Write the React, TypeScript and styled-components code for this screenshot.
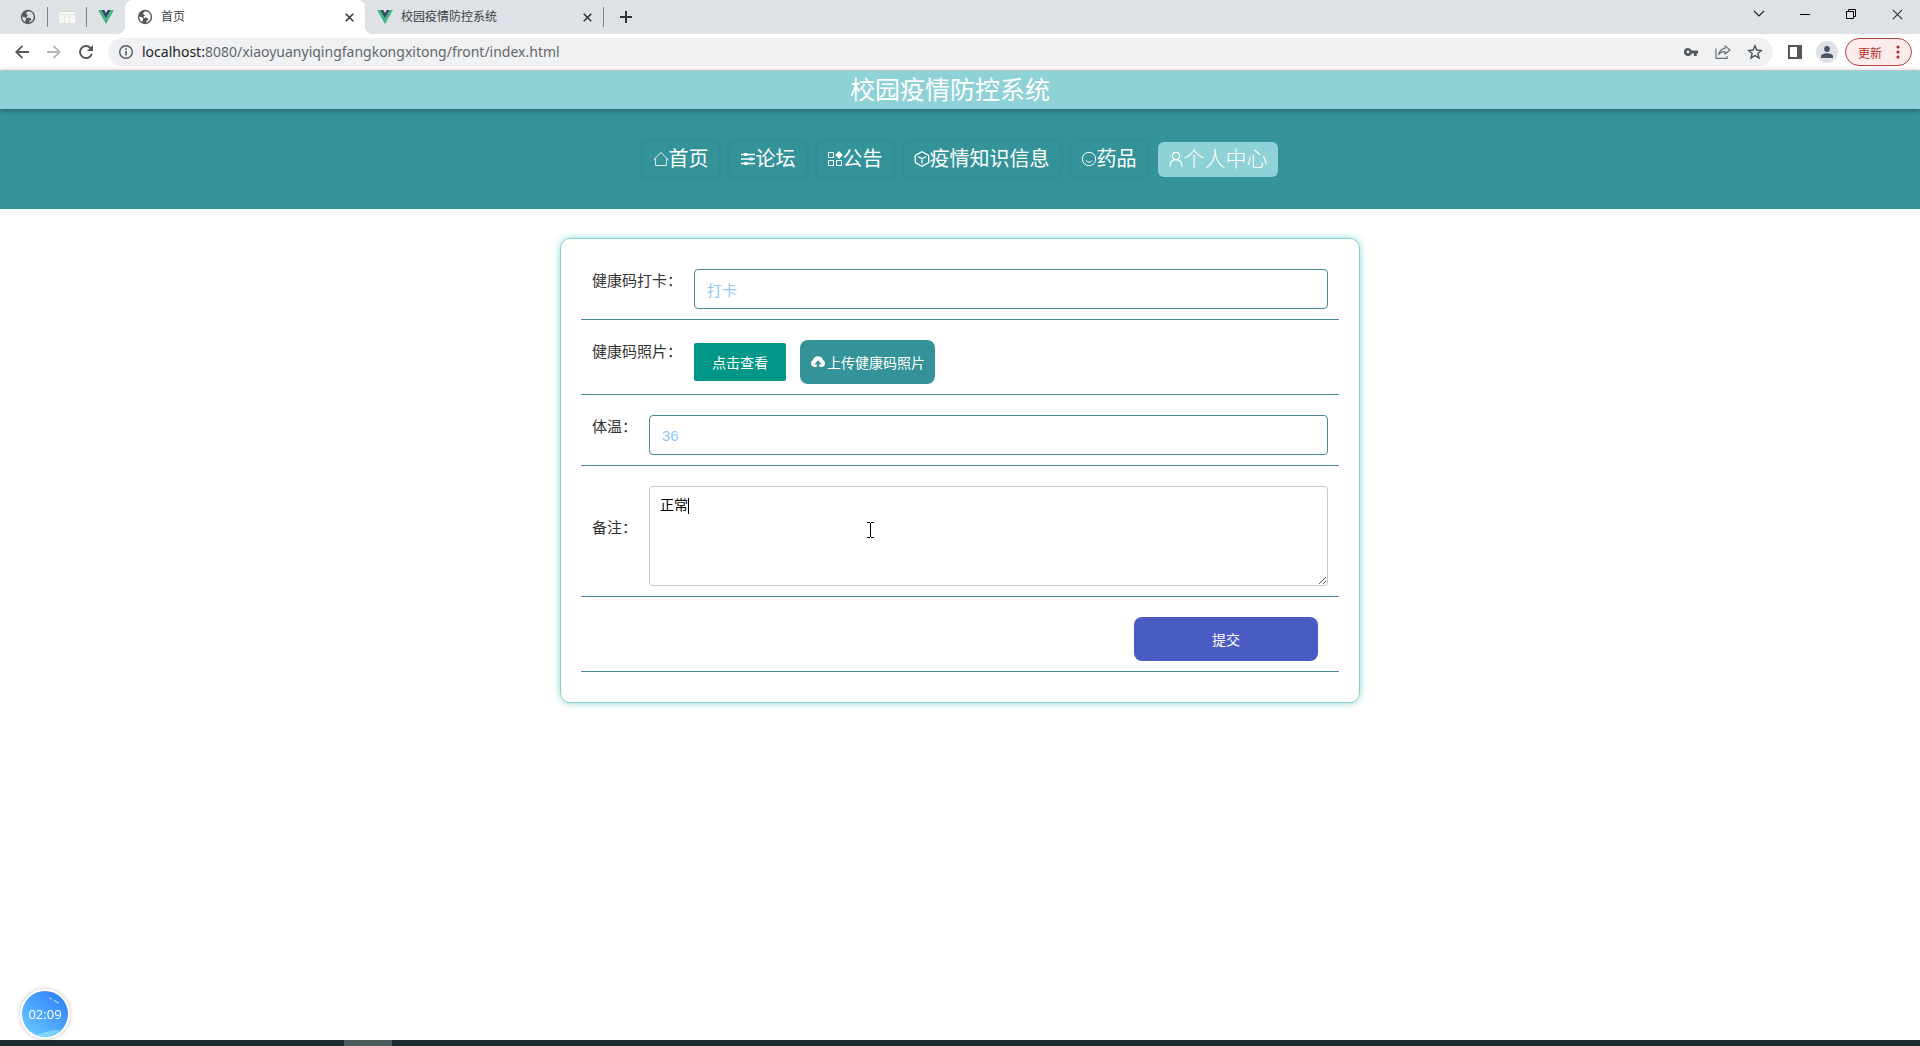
import React from "react";
import styled, { createGlobalStyle } from "styled-components";

const GlobalStyle = createGlobalStyle`
  *, *::before, *::after { box-sizing: border-box; }
  body {
    margin: 0;
    background: #fff;
    font-family: "Liberation Sans", "Noto Sans CJK SC", sans-serif;
    color: #333;
  }
  button, input, textarea { font-family: inherit; margin: 0; }
  svg { display: block; flex: none; }
`;

const Window = styled.div`
  display: flex;
  flex-direction: column;
  min-height: 100vh;
`;

const TabStrip = styled.div`
  display: flex;
  align-items: stretch;
  height: 34px;
  padding-left: 9px;
  background: #dee1e6;
`;

const PinnedTab = styled.button`
  display: flex;
  align-items: center;
  justify-content: center;
  width: 38px;
  padding: 0;
  border: 0;
  background: none;
`;

const NewTab = styled(PinnedTab)`
  width: 44px;
`;

const Separator = styled.span`
  align-self: center;
  width: 1px;
  height: 20px;
  background: #808387;
`;

const Tab = styled.div<{ $active?: boolean }>`
  position: relative;
  display: flex;
  align-items: center;
  gap: 8px;
  width: ${(p) => (p.$active ? 240 : 238)}px;
  padding: 0 8px 0 12px;
  font-size: 12px;
  color: #3c4043;
  border-radius: 8px 8px 0 0;
  background: ${(p) => (p.$active ? "#fff" : "transparent")};
  &::before, &::after {
    content: "";
    display: ${(p) => (p.$active ? "block" : "none")};
    position: absolute;
    bottom: 0;
    width: 8px;
    height: 8px;
  }
  &::before {
    left: -8px;
    background: radial-gradient(circle at 0 0, transparent 8px, #fff 8px);
  }
  &::after {
    right: -8px;
    background: radial-gradient(circle at 100% 0, transparent 8px, #fff 8px);
  }
`;

const TabTitle = styled.span`
  flex: 1;
  line-height: 16px;
  white-space: nowrap;
`;

const IconButton = styled.button<{ $w?: number }>`
  display: flex;
  align-items: center;
  justify-content: center;
  width: ${(p) => p.$w ?? 16}px;
  height: 28px;
  padding: 0;
  border: 0;
  background: none;
`;

const WindowControls = styled.div`
  display: flex;
  margin-left: auto;
`;

const Toolbar = styled.div`
  display: flex;
  align-items: center;
  height: 37px;
  padding: 0 8px 0 6px;
  background: #fff;
  border-bottom: 1px solid #d5e3e5;
`;

const AddressBar = styled.div`
  display: flex;
  align-items: center;
  flex: 1;
  height: 28px;
  margin: 0 6px;
  padding: 0 2px 0 10px;
  border-radius: 14px;
  background: #f0f1f3;
`;

const Url = styled.span`
  flex: 1;
  margin-left: 8px;
  font-family: "Noto Sans", sans-serif;
  font-size: 14px;
  line-height: 20px;
  color: #63676c;
  b { font-weight: 400; color: #202124; }
`;

const Avatar = styled.span`
  display: flex;
  align-items: center;
  justify-content: center;
  width: 22px;
  height: 22px;
  border-radius: 50%;
  background: #dee1e6;
`;

const UpdateButton = styled.button`
  display: flex;
  align-items: center;
  justify-content: space-between;
  width: 67px;
  height: 28px;
  margin-left: 2px;
  padding: 0 11px 0 12px;
  border: 1px solid #b3403c;
  border-radius: 14px;
  background: #fbebeb;
  color: #b3312c;
  font-size: 12px;
`;

const Banner = styled.header`
  position: relative;
  height: 38px;
  padding-right: 20px;
  background: #8ed1d6;
  box-shadow: 0 1px 6px rgba(0, 0, 0, 0.4);
`;

const BannerTitle = styled.h1`
  margin: 0;
  text-align: center;
  font-size: 25px;
  line-height: 38px;
  font-weight: 400;
  color: #fff;
`;

const Nav = styled.nav`
  display: flex;
  align-items: center;
  justify-content: center;
  gap: 11px;
  height: 100px;
  background: #339399;
`;

const NavLink = styled.a<{ $active?: boolean }>`
  display: flex;
  align-items: center;
  height: 35px;
  padding: 0 10px;
  border-radius: 6px;
  font-size: ${(p) => (p.$active ? 21 : 20)}px;
  font-weight: ${(p) => (p.$active ? 300 : 400)};
  line-height: 32px;
  color: #fff;
  text-decoration: none;
  white-space: nowrap;
  background: ${(p) => (p.$active ? "#8ed1d6" : "transparent")};
  box-shadow: ${(p) => (p.$active ? "none" : "0 0 4px rgba(0, 70, 80, 0.14)")};
`;

const Main = styled.main`
  flex: 1;
  padding: 29px 20px;
`;

const Form = styled.form`
  max-width: 800px;
  margin: 0 auto;
  padding: 20px;
  border: 1px solid #8fcdd0;
  border-radius: 10px;
  box-shadow: 0 0 7px rgba(110, 205, 200, 0.8);
`;

const Row = styled.div<{ $end?: boolean }>`
  display: flex;
  align-items: flex-start;
  justify-content: ${(p) => (p.$end ? "flex-end" : "flex-start")};
  gap: 12px;
  margin-bottom: 10px;
  padding: 10px 11px;
  border-bottom: 1px solid #46898f;
`;

const Label = styled.label<{ $tall?: boolean }>`
  padding-top: ${(p) => (p.$tall ? 30 : 0)}px;
  font-size: 15px;
  line-height: 24px;
  white-space: nowrap;
`;

const TextInput = styled.input`
  flex: 1;
  min-width: 0;
  height: 40px;
  padding: 0 12px;
  border: 1px solid #46898f;
  border-radius: 4px;
  background: #fff;
  font-size: 15px;
  color: #90c8f6;
  outline: none;
`;

const Actions = styled.div`
  display: flex;
  align-items: center;
  gap: 14px;
`;

const ViewButton = styled.button`
  height: 38px;
  padding: 0 18px;
  border: 0;
  border-radius: 2px;
  background: #009688;
  color: #fff;
  font-size: 14px;
`;

const UploadButton = styled.button`
  display: flex;
  align-items: center;
  gap: 1px;
  height: 44px;
  padding: 0 10px;
  border: 0;
  border-radius: 8px;
  background: #339399;
  color: #fff;
  font-size: 14px;
`;

const SubmitButton = styled.button`
  width: 184px;
  height: 44px;
  margin-right: 10px;
  border: 0;
  border-radius: 8px;
  background: #4a5bc3;
  color: #fff;
  font-size: 14px;
`;

const NoteField = styled.div`
  position: relative;
  display: flex;
  flex: 1;
`;

const TextArea = styled.textarea`
  flex: 1;
  height: 100px;
  padding: 8px 10px;
  border: 1px solid #c8c8c8;
  border-radius: 4px;
  background: #fff;
  font-size: 14px;
  line-height: 20px;
  color: #000;
  resize: vertical;
  outline: none;
`;

const Caret = styled.span`
  position: absolute;
  left: 39px;
  top: 12px;
  width: 1px;
  height: 16px;
  background: #000;
`;

const Pointer = styled.svg`
  position: absolute;
  left: 218px;
  top: 36px;
`;

const Timer = styled.div`
  position: fixed;
  left: 20px;
  bottom: 7px;
  display: flex;
  align-items: center;
  justify-content: center;
  width: 50px;
  height: 50px;
  border: 2px solid #fff;
  border-radius: 50%;
  box-shadow: 0 0 4px rgba(0, 0, 0, 0.25);
  background: #fff;
`;

const TimerFace = styled.svg`
  position: absolute;
  left: 0;
  top: 0;
`;

const TimerText = styled.time`
  position: relative;
  font-family: "Open Sans", sans-serif;
  font-size: 13px;
  color: #fff;
`;

const Taskbar = styled.footer`
  display: flex;
  height: 6px;
  padding-left: 344px;
  background: #1a2b30;
`;

const TaskbarItem = styled.span`
  width: 48px;
  background: #4a5a5b;
`;

const Globe = ({ land }: { land: string }) => (
  <svg width="16" height="16" viewBox="0 0 16 16">
    <circle cx="8" cy="8" r="7.2" fill="#54585d" />
    <path d="M8.500 2.300C6.800 2.600 5.900 3.900 6.400 4.900c.4.800 1.600.600 1.500 1.600-.1.800-1.300.500-1.400 1.300-.1.800 1.900.400 2.900 1 1 .600 2 .600 1.900 1.600-.1.900-1.300.700-1.700 1.400-.2.500 0 1.300-.5 1.700C11.800 13 13.700 10.700 13.700 8c0-3-2.300-5.500-5.200-5.700Z" fill={land} />
    <path d="M2.300 7.400c.9 0 1.700.9 2.700 1.100.9.200 1.500.8 1.300 1.600-.2.800-.9.900-.9 1.700v1.200C3.400 12.100 2.100 9.900 2.300 7.400Z" fill={land} />
  </svg>
);

const Sheet = () => (
  <svg width="16" height="12" viewBox="0 0 16 12">
    <path d="M0 0h16v12H0z" fill="#f6f7f4" />
    <path d="M0 .5h16" stroke="#c5dcc5" />
    <path d="M0 3.500h16M5.500 3v9M10.500 3v9" stroke="#e6eae6" fill="none" />
  </svg>
);

const VueLogo = () => (
  <svg width="16" height="14" viewBox="0 0 16 14">
    <path d="M0 0h3.200L8 8.300 12.800 0H16L8 14Z" fill="#41b883" />
    <path d="M3.200 0h3L8 3.100 9.800 0h3L8 8.300Z" fill="#35495e" />
  </svg>
);

const Cross = ({ size = 9, w = 1.7 }: { size?: number; w?: number }) => (
  <svg width={size} height={size} viewBox="0 0 10 10" stroke="#303236" strokeWidth={w}>
    <path d="M.8.8l8.400 8.400M9.200.8.8 9.200" />
  </svg>
);

const navIcon = { width: 16, height: 16, viewBox: "0 0 16 16", fill: "none", stroke: "#fff" };

const HomeIcon = () => (
  <svg {...navIcon}>
    <path d="M.4 9 8 1.500 15.600 9M2.600 7.500v7h10.800v-7" strokeOpacity=".85" />
  </svg>
);
const SlidersIcon = () => (
  <svg {...navIcon}>
    <path d="M1 3.500h14M1 8h14M1 12.500h14" strokeWidth="1.400" />
    <path d="M5.500 1.900v3.200M11 6.400v3.200M6 10.900v3.200" strokeWidth="3.400" />
  </svg>
);
const AppsIcon = () => (
  <svg {...navIcon}>
    <path d="M1.500 1.500h5v5h-5zM1.500 9.500h5v5h-5zM9.500 9.500h5v5h-5z" />
    <path d="M12 0 15.800 4 12 8 8.200 4Z" fill="#fff" stroke="none" />
  </svg>
);
const CubeIcon = () => (
  <svg {...navIcon}>
    <path d="M8 .8l6.700 3.700v7L8 15.200 1.300 11.500v-7ZM4 5.500l4 2.300 4-2.300M8 7.800v4.700" strokeWidth="1.300" />
  </svg>
);
const SmileIcon = () => (
  <svg {...navIcon}>
    <circle cx="8" cy="8" r="6.700" />
    <path d="M5 9.500c1.200 2.200 4.800 2.200 6 0" />
  </svg>
);
const UserIcon = () => (
  <svg {...navIcon}>
    <circle cx="8" cy="5" r="3.700" strokeWidth="1.200" />
    <path d="M2 15.500c.2-4.500 2.800-6.800 6-6.800s5.800 2.300 6 6.800" strokeWidth="1.200" />
  </svg>
);

const CloudUpload = () => (
  <svg width="16" height="16" viewBox="0 0 16 16">
    <path d="M4.200 13A3.700 3.700 0 0 1 3 6 5.200 5.200 0 0 1 13 6 3.700 3.700 0 0 1 11.800 13H9.300V10.300H11.600L8 6.200 4.400 10.300h2.300V13Z" fill="#fff" />
  </svg>
);

const navItems = [
  { text: "首页", icon: <HomeIcon /> },
  { text: "论坛", icon: <SlidersIcon /> },
  { text: "公告", icon: <AppsIcon /> },
  { text: "疫情知识信息", icon: <CubeIcon /> },
  { text: "药品", icon: <SmileIcon /> },
  { text: "个人中心", icon: <UserIcon />, active: true },
];

const BrowserChrome = () => (
  <>
    <TabStrip>
      <PinnedTab aria-label="Pinned tab"><Globe land="#dee1e6" /></PinnedTab>
      <Separator />
      <PinnedTab aria-label="Pinned tab"><Sheet /></PinnedTab>
      <Separator />
      <PinnedTab aria-label="Pinned tab"><VueLogo /></PinnedTab>
      <Tab $active>
        <Globe land="#fff" />
        <TabTitle>首页</TabTitle>
        <IconButton aria-label="Close tab"><Cross /></IconButton>
      </Tab>
      <Tab>
        <VueLogo />
        <TabTitle>校园疫情防控系统</TabTitle>
        <IconButton aria-label="Close tab"><Cross /></IconButton>
      </Tab>
      <Separator />
      <NewTab aria-label="New tab">
        <svg width="12" height="12" viewBox="0 0 12 12" stroke="#303236" strokeWidth="2">
          <path d="M6 0v12M0 6h12" />
        </svg>
      </NewTab>
      <WindowControls>
        <IconButton $w={46} aria-label="Search tabs">
          <svg width="12" height="8" viewBox="0 0 12 8" fill="none" stroke="#222" strokeWidth="1.200"><path d="M1 1l5 5 5-5" /></svg>
        </IconButton>
        <IconButton $w={46} aria-label="Minimize">
          <svg width="10" height="10" viewBox="0 0 10 10" stroke="#000"><path d="M0 5.500h10" /></svg>
        </IconButton>
        <IconButton $w={46} aria-label="Restore">
          <svg width="10" height="10" viewBox="0 0 10 10" fill="none" stroke="#000"><path d="M.5 2.500h7v7h-7zM2.500 2.500v-2h7v7h-2" /></svg>
        </IconButton>
        <IconButton $w={46} aria-label="Close"><Cross size={11} w={1} /></IconButton>
      </WindowControls>
    </TabStrip>
    <Toolbar>
      <IconButton $w={32} aria-label="Back">
        <svg width="14" height="14" viewBox="0 0 14 14" fill="none" stroke="#54585d" strokeWidth="1.800"><path d="M14 7H1.500M7.500.8 1.300 7l6.200 6.200" /></svg>
      </IconButton>
      <IconButton $w={32} aria-label="Forward">
        <svg width="14" height="14" viewBox="0 0 14 14" fill="none" stroke="#b4b6b9" strokeWidth="1.800"><path d="M0 7h12.500M6.500.8 12.700 7l-6.200 6.200" /></svg>
      </IconButton>
      <IconButton $w={32} aria-label="Reload">
        <svg width="14" height="14" viewBox="0 0 14 14" fill="none" stroke="#54585d" strokeWidth="1.900">
          <path d="M12.800 8.700A6 6 0 1 1 11.500 3" />
          <path d="M14 0v6H8Z" fill="#54585d" stroke="none" />
        </svg>
      </IconButton>
      <AddressBar>
        <svg width="16" height="16" viewBox="0 0 16 16" fill="none" stroke="#54585d" strokeWidth="1.400">
          <circle cx="8" cy="8" r="6.300" />
          <path d="M8 7v4.500M8 4.300v1.600" strokeWidth="1.600" />
        </svg>
        <Url><b>localhost:</b>8080/xiaoyuanyiqingfangkongxitong/front/index.html</Url>
        <IconButton $w={32} aria-label="Passwords">
          <svg width="14" height="8" viewBox="0 0 14 8" fill="#54585d">
            <path fillRule="evenodd" d="M4 0a4 4 0 0 1 3.700 2.600H14v2.800h-1.300V8H9.900V5.400H7.700A4 4 0 1 1 4 0Zm0 2.600a1.400 1.400 0 1 0 0 2.800 1.400 1.400 0 0 0 0-2.800Z" />
          </svg>
        </IconButton>
        <IconButton $w={32} aria-label="Share">
          <svg width="16" height="14" viewBox="0 0 16 14" fill="none" stroke="#6b6f74" strokeWidth="1.200">
            <path d="M1 3.500v9.900h11v-2.400" />
            <path d="M10 .9 15 5l-5 4V6.700C7 6.700 5 7.500 3.800 9.800 4.300 6 6.500 3.600 10 3.300Z" strokeLinejoin="round" />
          </svg>
        </IconButton>
        <IconButton $w={32} aria-label="Bookmark">
          <svg width="16" height="16" viewBox="0 0 16 16" fill="none" stroke="#54585d" strokeWidth="1.500">
            <path d="m8 1.800 1.800 4.300 4.600.4-3.500 3 1.100 4.500L8 11.600 4 14l1.100-4.500-3.500-3 4.600-.4Z" />
          </svg>
        </IconButton>
      </AddressBar>
      <IconButton $w={32} aria-label="Side panel">
        <svg width="14" height="14" viewBox="0 0 14 14"><path d="M1 1h12v12H1z" fill="#fff" stroke="#54585d" strokeWidth="2" /><path d="M9 1h4v12H9z" fill="#54585d" /></svg>
      </IconButton>
      <IconButton $w={32} aria-label="Profile">
        <Avatar>
          <svg width="12" height="12" viewBox="0 0 12 12" fill="#4a5568"><circle cx="6" cy="3" r="2.900" /><path d="M0 12v-1.500C0 8.500 3 7.300 6 7.300s6 1.200 6 3.200V12Z" /></svg>
        </Avatar>
      </IconButton>
      <UpdateButton>
        更新
        <svg width="4" height="14" viewBox="0 0 4 14" fill="#b3312c"><circle cx="2" cy="2" r="1.600" /><circle cx="2" cy="7" r="1.600" /><circle cx="2" cy="12" r="1.600" /></svg>
      </UpdateButton>
    </Toolbar>
  </>
);

export default function App() {
  return (
    <Window>
      <GlobalStyle />
      <BrowserChrome />
      <Banner>
        <BannerTitle>校园疫情防控系统</BannerTitle>
      </Banner>
      <Nav>
        {navItems.map((item) => (
          <NavLink key={item.text} href="#" $active={item.active}>
            {item.icon}
            {item.text}
          </NavLink>
        ))}
      </Nav>
      <Main>
        <Form onSubmit={(e) => e.preventDefault()}>
          <Row>
            <Label htmlFor="checkin">健康码打卡：</Label>
            <TextInput id="checkin" defaultValue="打卡" />
          </Row>
          <Row>
            <Label htmlFor="upload">健康码照片：</Label>
            <Actions>
              <ViewButton type="button">点击查看</ViewButton>
              <UploadButton type="button" id="upload">
                <CloudUpload />
                上传健康码照片
              </UploadButton>
            </Actions>
          </Row>
          <Row>
            <Label htmlFor="temperature">体温：</Label>
            <TextInput id="temperature" defaultValue="36" />
          </Row>
          <Row>
            <Label htmlFor="note" $tall>备注：</Label>
            <NoteField>
              <TextArea id="note" defaultValue="正常" />
              <Caret />
              <Pointer width="7" height="16" viewBox="0 0 7 16" fill="none" stroke="#000">
                <path d="M0 .5h3M4 .5h3M3.500 1v14M0 15.500h3M4 15.500h3" />
              </Pointer>
            </NoteField>
          </Row>
          <Row $end>
            <SubmitButton type="submit">提交</SubmitButton>
          </Row>
        </Form>
      </Main>
      <Taskbar>
        <TaskbarItem />
      </Taskbar>
      <Timer>
        <TimerFace width="46" height="46" viewBox="0 0 46 46">
          <defs>
            <linearGradient id="face" x1="0.1" y1="0.9" x2="0.8" y2="0.1">
              <stop offset="0" stopColor="#66c6ff" />
              <stop offset="1" stopColor="#3385fb" />
            </linearGradient>
          </defs>
          <circle cx="23" cy="23" r="23" fill="url(#face)" />
          <path d="M14 43.500c6-1 12-4.500 24-4.500-6 6-16 9-24 4.500Z" fill="#7fd6fb" />
          <path d="M27 7l3 1M32 9l5 3.500" stroke="#a9d3ff" strokeWidth="1.200" />
        </TimerFace>
        <TimerText>02:09</TimerText>
      </Timer>
    </Window>
  );
}
